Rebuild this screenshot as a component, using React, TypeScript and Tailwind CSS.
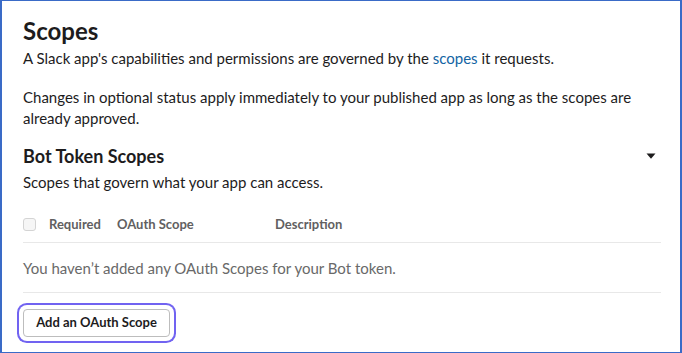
import React from "react";

const CaretDown = () => (
  <svg width="10" height="6" viewBox="0 0 10 6" className="mr-[5px]">
    <path d="M0.5 0.5h9L5 5.8z" fill="#1d1c1d" />
  </svg>
);

const App = () => {
  return (
    <div
      className="w-[682px] h-[353px] bg-white border-y border-x-2 border-[#3a6bc7] overflow-hidden text-[#1d1c1d]"
      style={{ fontFamily: "Lato, 'Noto Sans', sans-serif" }}
    >
      <div className="pl-[21px] pr-[19px] pt-[15px]">
        <h2 className="text-[24px] leading-[30px] font-bold">Scopes</h2>
        <p className="mt-[2px] text-[15px] leading-[21px]">
          A Slack app's capabilities and permissions are governed by the{" "}
          <a className="text-[#1264a3]">scopes</a> it requests.
        </p>
        <p className="mt-[18px] text-[15px] leading-[21px]">
          Changes in optional status apply immediately to your published app as long as the scopes are already
          approved.
        </p>

        <div className="mt-[15px] flex items-center justify-between">
          <h3 className="text-[18px] leading-[24px] font-bold">Bot Token Scopes</h3>
          <CaretDown />
        </div>
        <p className="mt-[4px] text-[15px] leading-[21px]">Scopes that govern what your app can access.</p>

        <div className="pt-[22px] pb-[9px] border-b border-[#e8e8e8] flex items-center text-[13px] leading-[18px] font-bold text-[#616061]">
          <span className="w-[13px] h-[13px] rounded-[3px] border border-[#d4d4d4] bg-[#f6f6f6]" />
          <span className="ml-[13px] w-[68px]">Required</span>
          <span className="w-[158px]">OAuth Scope</span>
          <span>Description</span>
        </div>

        <div className="pt-[15px] pb-[13px] border-b border-[#e8e8e8] text-[15px] leading-[21px] text-[#696969]">
          You haven’t added any OAuth Scopes for your Bot token.
        </div>

        <button className="mt-[16px] h-[28px] w-[147px] rounded-[4px] border border-[#bdbdbd] bg-white text-[13px] font-bold text-[#1d1c1d] ring-2 ring-[#7163f1] ring-offset-4 ring-offset-white">
          Add an OAuth Scope
        </button>
      </div>
    </div>
  );
};

export default App;
